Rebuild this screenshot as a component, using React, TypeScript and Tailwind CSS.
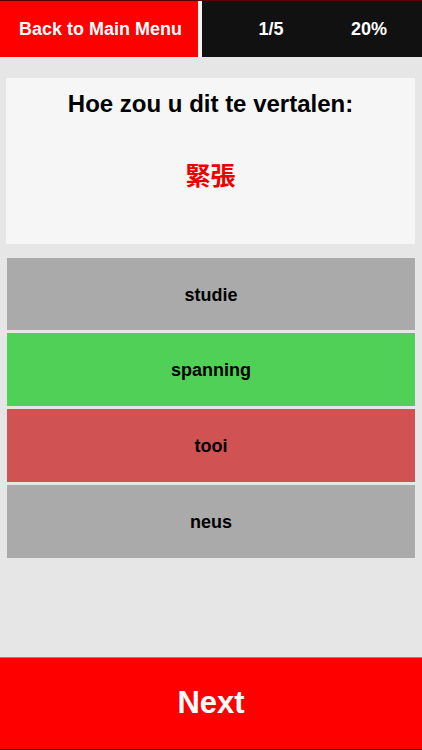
export default function App() {
  const opciones = [
    { texto: 'studie', color: 'bg-[#aaaaaa]', alto: 'h-[72px]' },
    { texto: 'spanning', color: 'bg-[#50d056]', alto: 'h-[73px]' },
    { texto: 'tooi', color: 'bg-[#d05252]', alto: 'h-[73px]' },
    { texto: 'neus', color: 'bg-[#aaaaaa]', alto: 'h-[73px]' },
  ];

  return (
    <div
      className="h-[750px] w-full bg-[#e6e6e6] flex flex-col"
      style={{ fontFamily: '"Liberation Sans", Arial, "Noto Sans CJK JP", sans-serif' }}
    >
      {/* Barra superior */}
      <div className="h-[57px] flex border-t border-[#5a0000]">
        <button className="w-[198px] bg-[#ff0000] text-white font-bold text-[18px] flex items-center justify-center pl-[3px]">
          Back to Main Menu
        </button>
        <div className="w-[4px] bg-[#f4f4f4]" />
        <div className="flex-1 bg-[#111111] text-white font-bold text-[18px] flex items-center">
          <span className="w-[110px] text-center pl-[28px]">1/5</span>
          <span className="flex-1 text-center pl-[4px]">20%</span>
        </div>
      </div>

      {/* Pregunta */}
      <div className="mt-[21px] ml-[6px] mr-[7px] h-[166px] bg-[#f6f6f6] flex flex-col items-center">
        <h2 className="mt-[14px] text-[24px] font-bold text-black leading-none">Hoe zou u dit te vertalen:</h2>
        <p className="mt-[48px] text-[25px] font-bold text-[#ee0000] leading-none">緊張</p>
      </div>

      {/* Opciones */}
      <div className="mt-[14px] ml-[7px] mr-[7px] flex flex-col gap-[3px]">
        {opciones.map((o) => (
          <button
            key={o.texto}
            className={`${o.alto} ${o.color} text-black font-bold text-[18px] flex items-center justify-center pt-[2px]`}
          >
            {o.texto}
          </button>
        ))}
      </div>

      {/* Siguiente */}
      <button className="mt-auto h-[93px] bg-[#ff0000] border-t border-[#f06060] border-b border-b-[#3a0000] text-white font-bold text-[31px] flex items-center justify-center">
        Next
      </button>
    </div>
  );
}
